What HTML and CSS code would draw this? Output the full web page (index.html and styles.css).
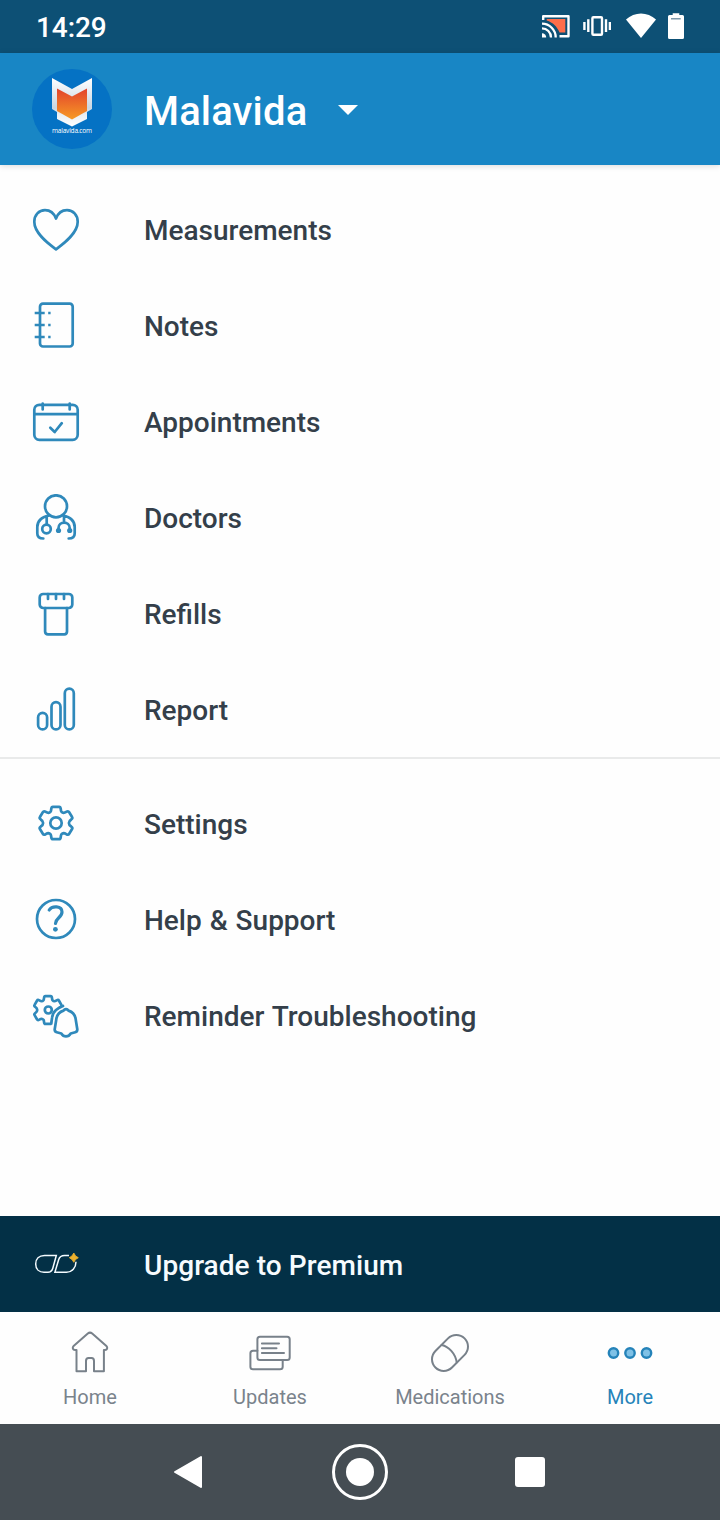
FILE: index.html
```html
<!DOCTYPE html>
<html lang="en">
<head>
  <meta charset="UTF-8">
  <meta name="viewport" content="width=device-width, initial-scale=1">
  <title>More</title>
  <link rel="stylesheet" href="styles.css">
</head>
<body>

<div class="status-bar">
  <span class="clock">14:29</span>
  <div class="status-icons">
    <svg width="30" height="28" viewBox="0 0 30 28">
      <path d="M5.7 7H24.3V20.5H18.5C16 14.500 12 10.500 5.700 8.500z" fill="#ff6e4a"/>
      <path d="M2.200 8V4.200H27.500V24.300H18.500" fill="none" stroke="#fff" stroke-width="2.400" stroke-linejoin="round"/>
      <path d="M1 11.700A13.700 13.700 0 0 1 14.700 25.400M1 16.400A9 9 0 0 1 10 25.400" fill="none" stroke="#fff" stroke-width="2.300"/>
      <path d="M1 21.200A4.200 4.200 0 0 1 5.200 25.400H1z" fill="#fff"/>
    </svg>
    <svg class="vibrate" width="28" height="28" viewBox="0 0 28 28" fill="none" stroke="#fff" stroke-width="2.400">
      <rect x="9.400" y="5.200" width="9.600" height="17.600" rx="1"/>
      <path d="M5.300 7.300V20M1.400 10V18M23 7.300V20M26.900 10V18"/>
    </svg>
    <svg class="wifi" width="30" height="28" viewBox="0 0 30 28">
      <path d="M0 7.500C8.500-.5 21.500-.5 30 7.500L15 26z" fill="#fff"/>
    </svg>
    <svg class="battery" width="16" height="28" viewBox="0 0 16 28">
      <path d="M4.700 1.300H11.300V3H14.500Q16 3 16 4.500V25.500Q16 27 14.500 27H1.500Q0 27 0 25.500V4.500Q0 3 1.500 3H4.700z" fill="#fff"/>
      <path d="M3 6.800H12.700" stroke="#5d7f96" stroke-width="1.200"/>
    </svg>
  </div>
</div>

<header class="header">
  <svg class="avatar" width="80" height="80" viewBox="0 0 80 80">
    <defs>
      <linearGradient id="shield" x1="0" y1="0" x2="0" y2="1">
        <stop offset="0" stop-color="#e2432c"/>
        <stop offset="1" stop-color="#f79a25"/>
      </linearGradient>
      <linearGradient id="frame" x1="0" y1="0" x2="0" y2="1">
        <stop offset="0" stop-color="#fff"/>
        <stop offset=".62" stop-color="#c9d6e2"/>
        <stop offset=".75" stop-color="#e8eef3"/>
        <stop offset="1" stop-color="#fff"/>
      </linearGradient>
    </defs>
    <circle cx="40" cy="40" r="40" fill="#0572c4"/>
    <path d="M20 9L40 20L60 9V40L55 43V50L40 57.500L25 50V43L20 40z" fill="url(#frame)"/>
    <path d="M25 19.500L40 27.500L55 19.500V42L40 50.500L25 42z" fill="url(#shield)"/>
    <text class="avatar-text" x="40" y="64" text-anchor="middle" textLength="40">malavida.com</text>
  </svg>
  <h1>Malavida</h1>
  <svg class="caret" width="20" height="10" viewBox="0 0 20 10"><path d="M0 0H20L10 10z" fill="#fff"/></svg>
</header>

<main>
  <ul class="menu">
    <li>
      <svg class="icon" viewBox="0 0 48 48"><path d="M24 43.300C14 36 2.300 26.500 2.300 15.800C2.300 9 7 4.200 13 4.200C18 4.200 22 7.200 24 12.600C26 7.200 30 4.200 35 4.200C41 4.200 45.700 9 45.700 15.800C45.700 26.500 34 36 24 43.300z"/></svg>
      Measurements
    </li>
    <li>
      <svg class="icon" viewBox="0 0 48 48">
        <rect x="8" y="1.700" width="32.700" height="42.800" rx="3"/>
        <path d="M2.700 11H12.700M2.700 23H12.700M2.700 35H12.700M16.200 11H18.600M16.200 23H18.600M16.200 35H18.600" stroke-linecap="butt"/>
      </svg>
      Notes
    </li>
    <li>
      <svg class="icon" viewBox="0 0 48 48">
        <rect x="2.300" y="6.800" width="43.400" height="35" rx="5"/>
        <path d="M2.300 16.200H45.700M10.700 5.500V11.500M37.700 5.500V11.500M18.300 29.800L22.700 34L29.800 25.200"/>
      </svg>
      Appointments
    </li>
    <li>
      <svg class="icon" viewBox="0 0 48 48">
        <circle cx="24" cy="12.300" r="11"/>
        <path d="M17 21.500C10 23 5.300 27 5.300 33V39.500C5.300 42.500 7.500 44.500 11.300 44.500M31 21.500C38 23 42.700 27 42.700 33V39.500C42.700 42.500 40.500 44.500 36.700 44.500M14.700 23V30.500M32 22V28.500M26.500 36.500V34C26.500 26.800 37.700 26.800 37.700 34V36.500"/>
        <circle cx="14.500" cy="35" r="4.300"/>
        <circle class="dot" cx="26.500" cy="36.500" r="2.600"/>
        <circle class="dot" cx="37.700" cy="36.500" r="2.600"/>
      </svg>
      Doctors
    </li>
    <li>
      <svg class="icon" viewBox="0 0 48 48">
        <rect x="7.700" y="4" width="32.600" height="14" rx="3.500"/>
        <path d="M16 4V9M24 4V9M32 4V9M13.100 18V41.500Q13.100 44.300 16 44.300H32.300Q35 44.300 35 41.500V18"/>
      </svg>
      Refills
    </li>
    <li>
      <svg class="icon" viewBox="0 0 48 48">
        <rect x="6.100" y="26.800" width="9" height="16.600" rx="4.500"/>
        <rect x="19.500" y="16.200" width="9" height="27.200" rx="4.500"/>
        <rect x="32.800" y="2.700" width="9" height="40.700" rx="4.500"/>
      </svg>
      Report
    </li>
  </ul>

  <ul class="menu menu-secondary">
    <li>
      <svg class="icon" viewBox="0 0 48 48">
        <defs>
          <path id="gear" d="M-5.200-11.400Q-4.800-12-4.600-14Q-4.400-16.200-3-16.200H3Q4.400-16.200 4.600-14Q4.800-12 5.200-11.400Q6.200-10.200 7.300-10.200Q8.500-10.300 10-11.200Q12-12.200 12.800-10.800L15.600-6Q16.400-4.700 14.800-3.500Q12.500-2 12.500 0Q12.500 2 14.800 3.500Q16.400 4.700 15.600 6L12.800 10.800Q12 12.200 10 11.200Q8.500 10.300 7.300 10.200Q6.200 10.200 5.200 11.400Q4.800 12 4.600 14Q4.400 16.200 3 16.200H-3Q-4.400 16.200-4.600 14Q-4.800 12-5.200 11.400Q-6.200 10.200-7.300 10.200Q-8.500 10.300-10 11.200Q-12 12.200-12.800 10.800L-15.600 6Q-16.400 4.700-14.800 3.500Q-12.500 2-12.500 0Q-12.500-2-14.800-3.500Q-16.400-4.700-15.600-6L-12.800-10.800Q-12-12.200-10-11.200Q-8.500-10.300-7.300-10.200Q-6.200-10.200-5.200-11.400z" vector-effect="non-scaling-stroke"/>
        </defs>
        <use href="#gear" transform="translate(24 23) scale(1.030 1)"/>
        <circle cx="24" cy="23" r="5.700"/>
      </svg>
      Settings
    </li>
    <li>
      <svg class="icon" viewBox="0 0 48 48">
        <circle cx="24" cy="23" r="19"/>
        <path class="question" d="M17.200 14C20 9.500 30 9.500 30 16C30 21.500 23.600 22 23.500 27.500"/>
        <circle class="dot" cx="23.400" cy="33.300" r="2.400"/>
      </svg>
      Help &amp; Support
    </li>
    <li>
      <svg class="icon" viewBox="0 0 48 48">
        <use href="#gear" transform="translate(16 18) scale(.86)"/>
        <circle cx="16.300" cy="18" r="3.500"/>
        <path class="bell-gap" d="M34 18L28 20.500Q24.500 23 24.200 28L23 37.500Q22.800 39.500 25 40.300L29.500 41.500Q31 44.200 34 44.200Q37 44.200 38.500 41.500L43 40.300Q45.200 39.500 45 37.500L43.800 28Q43.500 23 40 20.500z"/>
        <path d="M31 14Q27 15.500 24 18Q20.500 21 20 26L19.300 31.500"/>
        <path d="M34 17.200Q32.500 17.400 31.500 18.600Q24.800 20.800 24.200 28L22.700 37.300Q22.500 39.600 24.700 40.200L29.300 41.500Q31 44.400 34 44.400Q37 44.400 38.700 41.500L43.300 40.200Q45.500 39.600 45.300 37.300L43.800 28Q43.200 20.800 36.500 18.600Q35.500 17.400 34 17.200z"/>
      </svg>
      Reminder Troubleshooting
    </li>
  </ul>
</main>

<div class="upgrade">
  <svg width="48" height="48" viewBox="0 0 48 48" fill="none" stroke="#f4fbff" stroke-width="1.500">
    <path d="M24.300 15.500H12.500C7 15.500 3.700 19 3.700 24C3.700 29 7 32.300 12 32.300H16C18.500 32.300 20 31 20.800 28.300z"/>
    <path d="M37 15.500H32.500C29 15.500 27.500 17 26.700 19.500L22.900 32.300H34.500C40 32.300 44 27.500 44 21.800"/>
    <path d="M41.800 13Q43 16.500 46.300 17.700Q43 19 41.800 22.300Q40.500 19 37.300 17.700Q40.500 16.500 41.800 13z" fill="#ecb22e" stroke="#e6ae2e" stroke-width=".9"/>
  </svg>
  <span>Upgrade to Premium</span>
</div>

<nav class="tabs">
  <a class="tab">
    <svg class="tab-icon" viewBox="0 0 48 48">
      <path d="M10.500 43.300V22H9C6.800 22 6 19.500 7.600 18L21.800 5.500Q24 3.700 26.200 5.500L40.400 18C42 19.500 41.200 22 39 22H37.900V43.300H28V33Q28 30 25.500 30H22.600Q20 30 20 33V43.300z"/>
    </svg>
    Home
  </a>
  <a class="tab">
    <svg class="tab-icon" viewBox="0 0 48 48">
      <rect x="11.400" y="8.800" width="32.300" height="23.300" rx="2.500"/>
      <path d="M11.400 22.700H7Q4.400 22.700 4.400 25.300V38.700Q4.400 41.300 7 41.300H34Q36.700 41.300 36.700 38.700V32.100M15.900 15.600H33M15.900 20.300H30.500M15.900 25H38"/>
    </svg>
    Updates
  </a>
  <a class="tab">
    <svg class="tab-icon" viewBox="0 0 48 48">
      <rect x="3.400" y="13.200" width="41.200" height="23.400" rx="11.700" transform="rotate(-45 24 24.900)"/>
      <path d="M15.700 17C22.500 18.500 29.500 25.500 30.700 34.500"/>
    </svg>
    Medications
  </a>
  <a class="tab active">
    <svg class="tab-icon" viewBox="0 0 48 48">
      <circle cx="7.500" cy="25" r="4.700"/>
      <circle cx="24" cy="25" r="4.700"/>
      <circle cx="40.500" cy="25" r="4.700"/>
    </svg>
    More
  </a>
</nav>

<div class="system-nav">
  <svg width="32" height="36" viewBox="0 0 32 36"><path d="M3 18L29 3V33z" fill="#fff" stroke="#fff" stroke-width="2" stroke-linejoin="round"/></svg>
  <svg width="56" height="56" viewBox="0 0 56 56"><circle cx="28" cy="28" r="26.500" fill="none" stroke="#fff" stroke-width="3"/><circle cx="28" cy="28" r="14" fill="#fff"/></svg>
  <span class="recent"></span>
</div>

</body>
</html>
```
FILE: styles.css
```css
* {
  box-sizing: border-box;
}
body {
  margin: 0;
  height: 1520px;
  display: flex;
  flex-direction: column;
  font-family: Roboto, sans-serif;
  background-color: #fefefe;
}
svg {
  display: block;
  flex-shrink: 0;
}

.status-bar {
  display: flex;
  justify-content: space-between;
  align-items: center;
  height: 53px;
  padding: 0 36px;
  background-color: #0d5075;
}
.clock {
  padding-top: 2px;
  color: white;
  font-size: 28px;
  font-weight: 500;
  letter-spacing: -0.1px;
}
.status-icons {
  display: flex;
  padding-bottom: 2px;
}
.vibrate {
  margin-left: 12px;
}
.wifi {
  margin-left: 15px;
}
.battery {
  margin-left: 12px;
}

.header {
  display: flex;
  align-items: center;
  height: 112px;
  padding: 0 32px;
  background-color: #1886c5;
  box-shadow: 0 1px 6px rgba(0, 0, 0, 0.15);
}
.header h1 {
  margin: 4px 0 0 32px;
  color: white;
  font-size: 40px;
  font-weight: 500;
  letter-spacing: 0.15px;
}
.caret {
  margin: 1px 0 0 31px;
}
.avatar-text {
  fill: white;
  font-family: "Open Sans", sans-serif;
  font-size: 6.5px;
}

main {
  flex: 1;
  padding-top: 17px;
}
.menu {
  list-style: none;
  margin: 0;
  padding: 0;
}
.menu li {
  display: flex;
  align-items: center;
  gap: 64px;
  height: 96px;
  padding-left: 32px;
  color: #343f4a;
  font-size: 28px;
  font-weight: 500;
  word-spacing: 1px;
}
.menu-secondary {
  margin-top: -1px;
  padding-top: 17px;
  border-top: 2px solid #e9eaea;
}
.icon {
  width: 48px;
  height: 48px;
  fill: none;
  stroke: #2f89bb;
  stroke-width: 2.7;
  stroke-linecap: round;
  stroke-linejoin: round;
}
.icon .dot {
  fill: #2f89bb;
  stroke: none;
}
.icon .question {
  stroke-width: 3.2;
}
.icon .bell-gap {
  fill: #fefefe;
  stroke: #fefefe;
  stroke-width: 8;
}

.upgrade {
  display: flex;
  align-items: center;
  gap: 64px;
  height: 96px;
  padding-left: 32px;
  background-color: #033046;
  color: #f6fbfe;
  font-size: 28px;
  font-weight: 500;
  letter-spacing: 0.07px;
}
.upgrade span {
  padding-top: 2px;
}

.tabs {
  display: flex;
  height: 112px;
  padding-top: 16px;
}
.tab {
  flex: 1;
  display: flex;
  flex-direction: column;
  align-items: center;
  gap: 9px;
  color: #7a838c;
  font-size: 20px;
}
.tab-icon {
  width: 48px;
  height: 48px;
  fill: none;
  stroke: #78818a;
  stroke-width: 2;
  stroke-linecap: round;
  stroke-linejoin: round;
}
.tab.active {
  color: #2583b9;
}
.tab.active .tab-icon {
  fill: #7fc1e6;
  stroke: #2583b9;
  stroke-width: 2.4;
}

.system-nav {
  display: flex;
  justify-content: space-between;
  align-items: center;
  height: 96px;
  padding: 0 175px 0 172px;
  background-color: #454d53;
}
.recent {
  width: 30px;
  height: 30px;
  border-radius: 3px;
  background-color: white;
}
```
